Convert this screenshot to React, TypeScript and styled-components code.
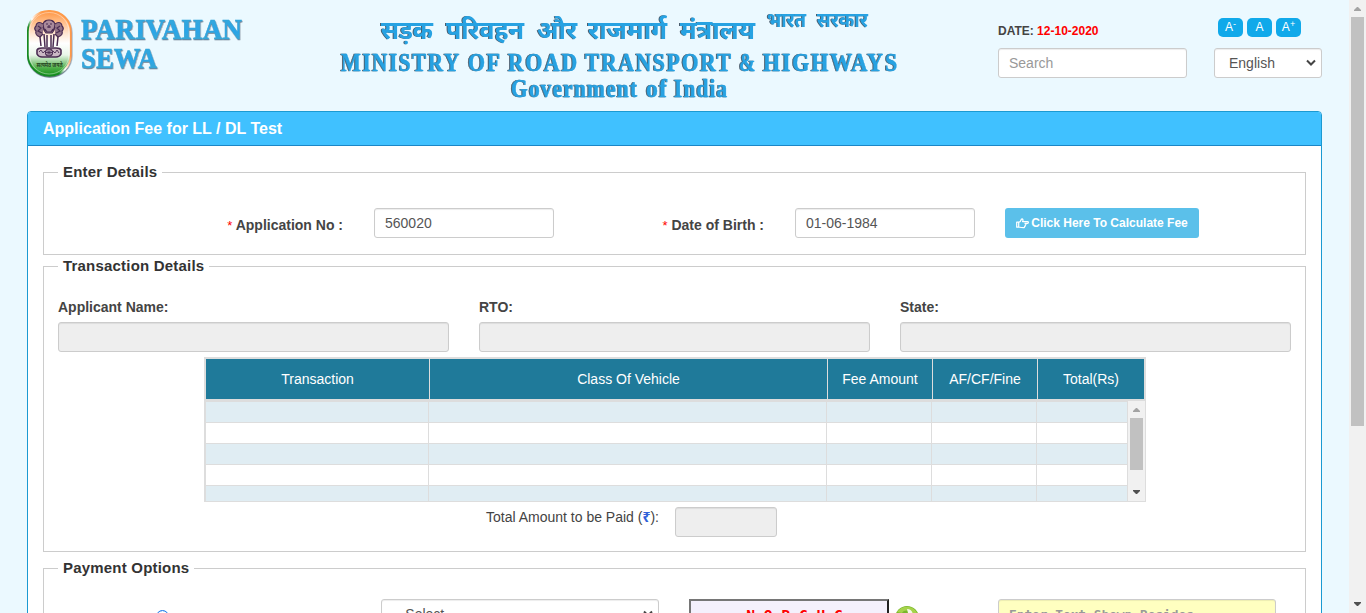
import React from 'react';
import styled, { createGlobalStyle, css } from 'styled-components';

const GlobalStyle = createGlobalStyle`
  * { box-sizing: border-box; }
  body {
    margin: 0;
    background: #ebf9ff;
    color: #444;
    font-family: "Liberation Sans", Arial, "Noto Sans", sans-serif;
    font-size: 14px;
    line-height: 20px;
  }
`;

const Page = styled.div`
  display: flex;
  height: 613px;
  overflow: hidden;
`;

const Content = styled.main`
  flex: 1;
  min-width: 0;
  padding: 0 27px;
`;

const Header = styled.header`
  display: flex;
  height: 111px;
`;

const Logo = styled.svg`
  display: block;
  width: 225px;
  height: 90px;
`;

const MinistryTitle = styled.svg`
  display: block;
  width: 580px;
  height: 108px;
  margin-left: 78px;
  filter: drop-shadow(-0.6px 0.9px 0.6px rgba(20, 40, 60, 0.75));
`;

const Tools = styled.div`
  display: grid;
  grid-template-columns: 189px 108px;
  grid-template-rows: 30px 30px;
  column-gap: 27px;
  margin-left: 88px;
  padding-top: 18px;
`;

const DateLine = styled.div`
  font-size: 12px;
  font-weight: bold;
  line-height: 26px;
  span { color: #f00; }
`;

const SizeButtons = styled.div`
  display: flex;
  gap: 4px;
  padding-left: 4px;
`;

const SizeButton = styled.button`
  width: 25px;
  height: 19px;
  padding: 0;
  border: 0;
  border-radius: 5px;
  background: #10a9ea;
  color: #fff;
  font: 12px/17px "Liberation Sans", sans-serif;
  sup { font-size: 9px; line-height: 0; vertical-align: 4px; }
`;

const field = css`
  height: 30px;
  border: 1px solid #ccc;
  border-radius: 3px;
  background: #fff;
  color: #555;
  font: 14px/20px "Liberation Sans", sans-serif;
  box-shadow: inset 0 1px 1px rgba(0, 0, 0, 0.075);
`;

const Input = styled.input<{ $w?: string }>`
  ${field}
  width: ${(p) => p.$w ?? '100%'};
  padding: 0 10px;
  &::placeholder { color: #999; opacity: 1; }
  &:disabled { background: #eee; }
`;

const SelectBox = styled.div<{ $w: string; $pad: number }>`
  ${field}
  display: flex;
  align-items: center;
  justify-content: space-between;
  width: ${(p) => p.$w};
  padding: 0 4px 0 ${(p) => p.$pad}px;
`;

const Panel = styled.section`
  height: 600px;
  border: 1px solid #1b9ad2;
  border-radius: 4px 4px 0 0;
  background: #fff;
`;

const PanelTitle = styled.h1`
  height: 34px;
  margin: 0;
  padding-left: 15px;
  border-bottom: 1px solid #1c86c6;
  border-radius: 3px 3px 0 0;
  background: #40c1ff;
  color: #fff;
  font-size: 16px;
  line-height: 33px;
`;

const PanelBody = styled.div`
  padding: 16px 15px 0;
`;

const Group = styled.fieldset<{ $h: number; $gap?: number }>`
  min-width: 0;
  height: ${(p) => p.$h}px;
  margin: 0 0 ${(p) => p.$gap ?? 0}px;
  padding: 0 14px;
  border: 1px solid #ccc;
`;

const Legend = styled.legend`
  height: 21px;
  padding: 0 5px;
  color: #333;
  font-size: 15px;
  font-weight: bold;
  line-height: 20px;
  letter-spacing: 0.2px;
`;

const DetailsRow = styled.div`
  display: flex;
  padding-top: 25px;
`;

const RequiredLabel = styled.label<{ $w: number }>`
  width: ${(p) => p.$w}px;
  margin-right: 31px;
  padding-top: 7px;
  font-weight: bold;
  text-align: right;
  span { color: #f00; font-weight: normal; font-size: 13px; }
`;

const FeeButton = styled.button`
  display: flex;
  align-items: center;
  justify-content: center;
  gap: 2px;
  width: 194px;
  height: 30px;
  margin-left: 30px;
  padding: 0;
  border: 0;
  border-radius: 3px;
  background: #5bc0ea;
  color: #fff;
  font: bold 12px "Liberation Sans", sans-serif;
`;

const ApplicantGrid = styled.div`
  display: grid;
  grid-template-columns: repeat(3, 391px);
  column-gap: 30px;
  padding-top: 20px;
`;

const FieldLabel = styled.label`
  display: block;
  height: 25px;
  font-weight: bold;
`;

const FeeTable = styled.div`
  width: 942px;
  height: 145px;
  margin: 5px 0 0 146px;
  border: 1px solid #ddd;
`;

const HeadRow = styled.div`
  display: grid;
  grid-template-columns: 223px 398px 105px 105px 1fr;
  height: 43px;
  border: 1px solid #ddd;
  border-bottom-width: 2px;
`;

const HeadCell = styled.div`
  background: #1f7a9a;
  color: #fff;
  line-height: 40px;
  text-align: center;
  & + & { border-left: 1px solid #ddd; }
`;

const TableBody = styled.div`
  display: flex;
  height: 100px;
`;

const Rows = styled.div`
  flex: 1;
  overflow: hidden;
  border-top: 1px solid #ddd;
  border-left: 1px solid #ddd;
`;

const Row = styled.div<{ $tinted: boolean }>`
  display: grid;
  grid-template-columns: 223px 398px 105px 105px 1fr;
  height: 21px;
  border-bottom: 1px solid #ddd;
  background: ${(p) => (p.$tinted ? '#e0edf3' : '#fff')};
  div { border-right: 1px solid #ddd; }
`;

const Track = styled.div<{ $pad?: number }>`
  display: flex;
  flex: none;
  flex-direction: column;
  align-items: center;
  width: 17px;
  height: 100%;
  padding-bottom: ${(p) => p.$pad ?? 0}px;
  background: #f1f1f1;
`;

const Thumb = styled.div<{ $h: number }>`
  width: 13px;
  height: ${(p) => p.$h}px;
  margin-bottom: auto;
  background: #c1c1c1;
`;

const ArrowIcon = styled.svg`
  display: block;
  flex: none;
`;

const TotalRow = styled.div`
  display: flex;
  padding: 5px 0 0 428px;
`;

const TotalLabel = styled.label`
  width: 189px;
  line-height: 21px;
  span { color: #2f62d9; font: bold 14px/1 "Noto Sans", "DejaVu Sans", sans-serif; }
`;

const PaymentRow = styled.div`
  display: flex;
  align-items: flex-start;
  padding: 20px 0 0 98px;
`;

const Radio = styled.span`
  width: 13px;
  height: 13px;
  margin: 11px 212px 0 0;
  border: 1.5px solid #1a78ea;
  border-radius: 50%;
  box-shadow: inset 0 0 0 2px #fff, inset 0 0 0 8px #1a78ea;
`;

const Captcha = styled.div`
  width: 200px;
  height: 34px;
  margin-left: 30px;
  padding-left: 11px;
  border: 2px solid;
  border-color: #767676 #212121 #212121 #767676;
  background: #f4f0fc;
  color: #f00;
  font: bold 14.6px/27px "DejaVu Sans Mono", monospace;
  text-align: center;
`;

const Refresh = styled.svg`
  width: 26px;
  height: 26px;
  margin: 6px 0 0 5px;
`;

const CaptchaInput = styled(Input)`
  margin-left: 78px;
  background: #ffffc0;
  font-family: "DejaVu Sans Mono", monospace;
  font-weight: bold;
  font-size: 12.8px;
`;

const Chevron = () => (
  <svg width="12" height="8" viewBox="0 0 12 8" fill="none" stroke="#444" strokeWidth="2">
    <path d="M2 1.5 6 5.5 10 1.5" />
  </svg>
);

const Arrow = ({ down, color }: { down?: boolean; color: string }) => (
  <ArrowIcon width="17" height="17" viewBox="0 0 17 17" fill={color}>
    <path d={down ? 'M5 7h7v1l-3 3h-1l-3-3z' : 'M5 11h7v-1l-3-3h-1l-3 3z'} />
  </ArrowIcon>
);

const Hand = () => (
  <svg width="13" height="11" viewBox="0 0 13 11" fill="none" stroke="#fff" strokeWidth="1.2" strokeLinejoin="round">
    <path d="M.7 4.200h2v5h-2zM2.700 4.500C4.500 4 5 2.500 5.500 1c1.600-.3 1.900 1.300 1 2.600h5c1.200 0 1.200 1.700 0 1.700H8.500M9.500 5.300c.8.500.5 1.600-.3 1.700.5.500.2 1.300-.6 1.400.2.800-.3 1.300-1 1.300-2.200 0-3.200-.2-4.900-.7" />
  </svg>
);

const Lion = () => (
  <g fill="none" stroke="#4a2c52" strokeWidth="1.200">
    <path d="M17 14c1-3 4-4 6-4s5 1 6 4l-1 6-2 3h-6l-2-3z" fill="#a98a9b" />
    <path d="M17 14c-4-3-7-1-7 2-2 2-1 4 0 5-1 3 1 5 4 6l3-3M29 14c4-3 7-1 7 2 2 2 1 4 0 5 1 3-1 5-4 6l-3-3" fill="#937386" />
    <path d="M20 14h2m2 0h2M21 17h4M23 15v3M19 19l2 3h4l2-3M12 16l3 2-3 3 4 2M34 16l-3 2 3 3-4 2M18 12l2-1m6 0 2 1M17 17l2 4M29 17l-2 4" />
    <path d="M14 27l1 9M18 24l1 13M21 25v12M25 25v12M28 24l-1 13M32 27l-1 9" strokeWidth="1.500" />
    <path d="M11 40c1-2 3-2 5-2h14c2 0 4 0 5 2v4c-1 2-3 3-5 3H16c-2 0-4-1-5-3z" fill="#cbb8c5" strokeWidth="1.600" />
    <circle cx="23" cy="42.500" r="3.500" />
    <path d="M23 39v7M19.500 42.500h7M20.500 40l5 5M25.500 40l-5 5M13 42l2-2 2 3 2-2M27 41l2 2 2-3 2 3" strokeWidth=".9" />
  </g>
);

type WordSpec = [text: string, start: number, end: number];

const Words = ({ items, y, size, spacing = 0 }: { items: WordSpec[]; y: number; size: number; spacing?: number }) => (
  <>
    {items.map(([text, start, end]) => (
      <text key={text} x={start} y={y} fontSize={size} letterSpacing={spacing} textLength={end - start + spacing} lengthAdjust="spacingAndGlyphs">
        {text}
      </text>
    ))}
  </>
);

export default function App() {
  return (
    <>
      <GlobalStyle />
      <Page>
        <Content>
          <Header>
            <Logo viewBox="0 0 225 90">
              <defs>
                <linearGradient id="flag" x1="0" y1="0" x2="0" y2="1">
                  <stop offset="0" stopColor="#ff9440" />
                  <stop offset=".35" stopColor="#ffe6d0" />
                  <stop offset=".5" stopColor="#fff" />
                  <stop offset=".68" stopColor="#e8f6e8" />
                  <stop offset=".88" stopColor="#4eae48" />
                  <stop offset="1" stopColor="#129018" />
                </linearGradient>
                <linearGradient id="rim" x1="1" y1="0" x2="0" y2="1">
                  <stop offset=".35" stopColor="#ff9a48" />
                  <stop offset=".52" stopColor="#fff" />
                  <stop offset=".62" stopColor="#168a22" />
                </linearGradient>
                <linearGradient id="name" x1="0" y1="0" x2="0" y2="1">
                  <stop offset="0" stopColor="#35a9d5" />
                  <stop offset=".6" stopColor="#2ba5e8" />
                  <stop offset="1" stopColor="#41a9c4" />
                </linearGradient>
                <filter id="shade" x="-10%" y="-10%" width="125%" height="125%">
                  <feDropShadow dx=".5" dy="1" stdDeviation=".6" floodColor="#4d5c70" floodOpacity=".8" />
                </filter>
              </defs>
              <rect x=".8" y="10.800" width="43" height="65" rx="21" fill="url(#flag)" stroke="url(#rim)" strokeWidth="1.800" filter="url(#shade)" />
              <rect x="2.500" y="12.500" width="39.500" height="61.500" rx="19.500" fill="none" stroke="#fff" strokeOpacity=".4" />
              <g transform="translate(-1 10)"><Lion /></g>
              <text x="22.500" y="67" textAnchor="middle" fontSize="6" fontWeight="bold" fill="#26451e" fontFamily="Noto Sans" textLength="26" lengthAdjust="spacingAndGlyphs">सत्यमेव जयते</text>
              <g fontFamily="Liberation Serif" fontWeight="bold" fill="url(#name)" stroke="#35a5da" strokeWidth=".5" filter="url(#shade)">
                <Words items={[['PARIVAHAN', 54, 215]]} y={39} size={30} />
                <Words items={[['SEWA', 54, 130]]} y={68} size={30} />
              </g>
            </Logo>
            <MinistryTitle viewBox="330 0 580 108" fill="#27a2e2" fontWeight="bold">
              <g fontFamily="Noto Sans, sans-serif">
                <Words y={39} size={26} items={[['सड़क', 381, 433], ['परिवहन', 446, 524], ['और', 537, 577], ['राजमार्ग', 588, 667], ['मंत्रालय', 680, 755]]} />
                <Words y={27} size={20} items={[['भारत', 767, 806], ['सरकार', 817, 868]]} />
              </g>
              <g fontFamily="Liberation Serif, serif" stroke="#27a2e2" strokeWidth=".4">
                <Words y={70.500} size={26} spacing={2} items={[['MINISTRY', 341, 459], ['OF', 468, 500], ['ROAD', 508, 577], ['TRANSPORT', 585, 731], ['&', 739, 755], ['HIGHWAYS', 763, 897]]} />
                <Words y={96.500} size={24.500} spacing={1.2} items={[['Government', 511, 637], ['of', 646, 667], ['India', 674, 727]]} />
              </g>
            </MinistryTitle>
            <Tools>
              <DateLine>DATE: <span>12-10-2020</span></DateLine>
              <SizeButtons>
                <SizeButton>A<sup>-</sup></SizeButton>
                <SizeButton>A</SizeButton>
                <SizeButton>A<sup>+</sup></SizeButton>
              </SizeButtons>
              <Input placeholder="Search" />
              <SelectBox $w="108px" $pad={14}>English<Chevron /></SelectBox>
            </Tools>
          </Header>
          <Panel>
            <PanelTitle>Application Fee for LL / DL Test</PanelTitle>
            <PanelBody>
              <Group $h={93} $gap={1}>
                <Legend>Enter Details</Legend>
                <DetailsRow>
                  <RequiredLabel $w={285}><span>*</span> Application No :</RequiredLabel>
                  <Input $w="180px" defaultValue="560020" />
                  <RequiredLabel $w={210}><span>*</span> Date of Birth :</RequiredLabel>
                  <Input $w="180px" defaultValue="01-06-1984" />
                  <FeeButton><Hand />Click Here To Calculate Fee</FeeButton>
                </DetailsRow>
              </Group>
              <Group $h={296} $gap={6}>
                <Legend>Transaction Details</Legend>
                <ApplicantGrid>
                  {['Applicant Name:', 'RTO:', 'State:'].map((label) => (
                    <div key={label}>
                      <FieldLabel>{label}</FieldLabel>
                      <Input disabled />
                    </div>
                  ))}
                </ApplicantGrid>
                <FeeTable>
                  <HeadRow>
                    {['Transaction', 'Class Of Vehicle', 'Fee Amount', 'AF/CF/Fine', 'Total(Rs)'].map((h) => (
                      <HeadCell key={h}>{h}</HeadCell>
                    ))}
                  </HeadRow>
                  <TableBody>
                    <Rows>
                      {[0, 1, 2, 3, 4].map((r) => (
                        <Row key={r} $tinted={r % 2 === 0}><div /><div /><div /><div /><div /></Row>
                      ))}
                    </Rows>
                    <Track $pad={1}>
                      <Arrow color="#a3a3a3" />
                      <Thumb $h={52} />
                      <Arrow down color="#505050" />
                    </Track>
                  </TableBody>
                </FeeTable>
                <TotalRow>
                  <TotalLabel>Total Amount to be Paid (<span>₹</span>):</TotalLabel>
                  <Input $w="102px" disabled />
                </TotalRow>
              </Group>
              <Group $h={100}>
                <Legend>Payment Options</Legend>
                <PaymentRow>
                  <Radio />
                  <SelectBox $w="278px" $pad={14}>--Select--<Chevron /></SelectBox>
                  <Captcha>N O P C H C</Captcha>
                  <Refresh viewBox="0 0 26 26">
                    <circle cx="13" cy="13" r="12" fill="#79b72c" />
                    <path d="M3 7C8 0 19 0 23 8l-5 3C16 5 11 4 8 8z" fill="#a6d34b" />
                    <path d="M13 4c4 0 6 3 6 7h-5V8z" fill="#f4fae8" />
                  </Refresh>
                  <CaptchaInput $w="278px" placeholder="Enter Text Shown Besides" />
                </PaymentRow>
              </Group>
            </PanelBody>
          </Panel>
        </Content>
        <Track $pad={1}>
          <Arrow color="#a3a3a3" />
          <Thumb $h={409} />
          <Arrow down color="#505050" />
        </Track>
      </Page>
    </>
  );
}
